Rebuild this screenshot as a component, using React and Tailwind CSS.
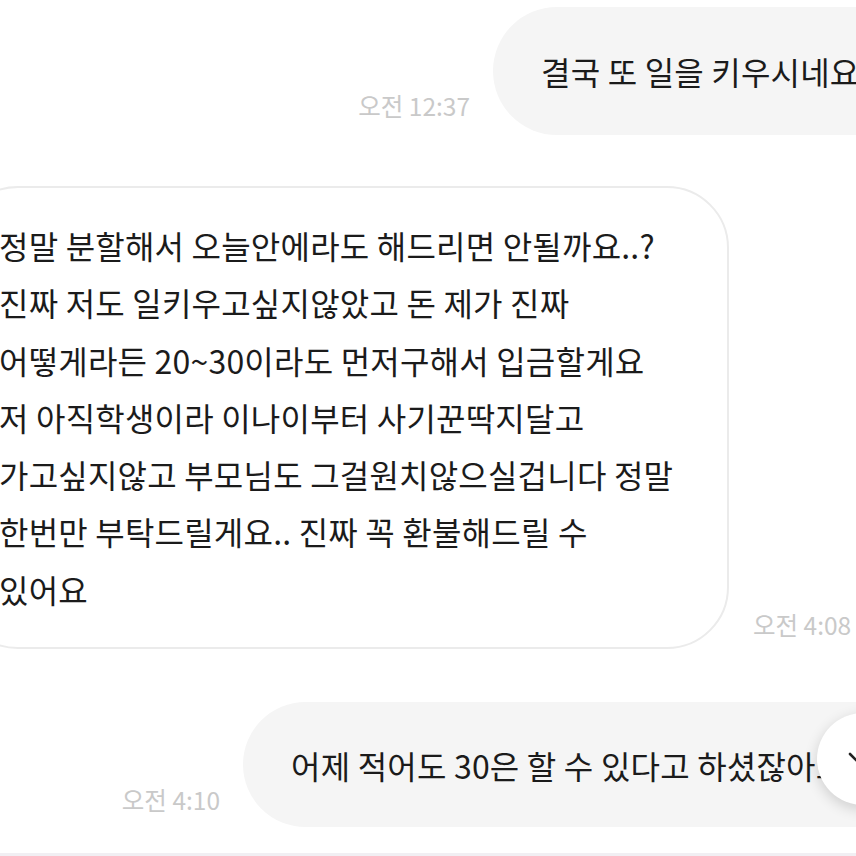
import React from "react";

const lines = [
  "정말 분할해서 오늘안에라도 해드리면 안될까요..?",
  "진짜 저도 일키우고싶지않았고 돈 제가 진짜",
  "어떻게라든 20~30이라도 먼저구해서 입금할게요",
  "저 아직학생이라 이나이부터 사기꾼딱지달고",
  "가고싶지않고 부모님도 그걸원치않으실겁니다 정말",
  "한번만 부탁드릴게요.. 진짜 꼭 환불해드릴 수",
  "있어요",
];

function Time({ children }) {
  return (
    <span className="whitespace-nowrap text-[24.5px] leading-[28px] text-[#c9c9c9]">
      {children}
    </span>
  );
}

export default function App() {
  return (
    <div
      className="relative flex h-[856px] w-[856px] flex-col overflow-hidden bg-white text-[#1b1b1b]"
      style={{ fontFamily: '"Noto Sans CJK KR", "Noto Sans", sans-serif' }}
    >
      {/* my message, top */}
      <div className="mt-[7px] flex items-end justify-end">
        <div className="mb-[14px] mr-[23px]">
          <Time>오전 12:37</Time>
        </div>
        <div className="mr-[-60px] flex h-[128px] w-[423px] shrink-0 items-center rounded-full bg-[#f5f5f5] pl-[48px]">
          <span className="whitespace-nowrap text-[32px] tracking-[0.2px]">결국 또 일을 키우시네요</span>
        </div>
      </div>

      {/* their message */}
      <div className="mt-[51px] flex items-end">
        <div className="ml-[-44px] w-[773px] shrink-0 rounded-[62px] border-2 border-[#ebebeb] bg-white pb-[29px] pl-[41px] pt-[29px]">
          {lines.map((l) => (
            <div key={l} className="whitespace-nowrap text-[32px] leading-[57.3px] tracking-[0.2px]">
              {l}
            </div>
          ))}
        </div>
        <div className="mb-[9px] ml-[24px]">
          <Time>오전 4:08</Time>
        </div>
      </div>

      {/* my message, bottom */}
      <div className="mt-[53px] flex items-end justify-end">
        <div className="mb-[12px] mr-[23px]">
          <Time>오전 4:10</Time>
        </div>
        <div className="mr-[-87px] flex h-[125px] w-[700px] shrink-0 items-center rounded-full bg-[#f5f5f5] pl-[48px]">
          <span className="whitespace-nowrap text-[32px] tracking-[0.2px]">어제 적어도 30은 할 수 있다고 하셨잖아요</span>
        </div>
      </div>

      <div className="mt-auto h-[3px] bg-[#f1eff3]" />

      {/* scroll down button */}
      <div className="absolute left-[817px] top-[713px] flex h-[92px] w-[92px] items-center justify-center rounded-full bg-white shadow-[0_4px_14px_rgba(0,0,0,0.16)]">
        <svg width="34" height="34" viewBox="0 0 34 34" fill="none">
          <path d="M4 12l13 13 13-13" stroke="#222" strokeWidth="2.6" strokeLinecap="round" strokeLinejoin="round" />
        </svg>
      </div>
    </div>
  );
}
